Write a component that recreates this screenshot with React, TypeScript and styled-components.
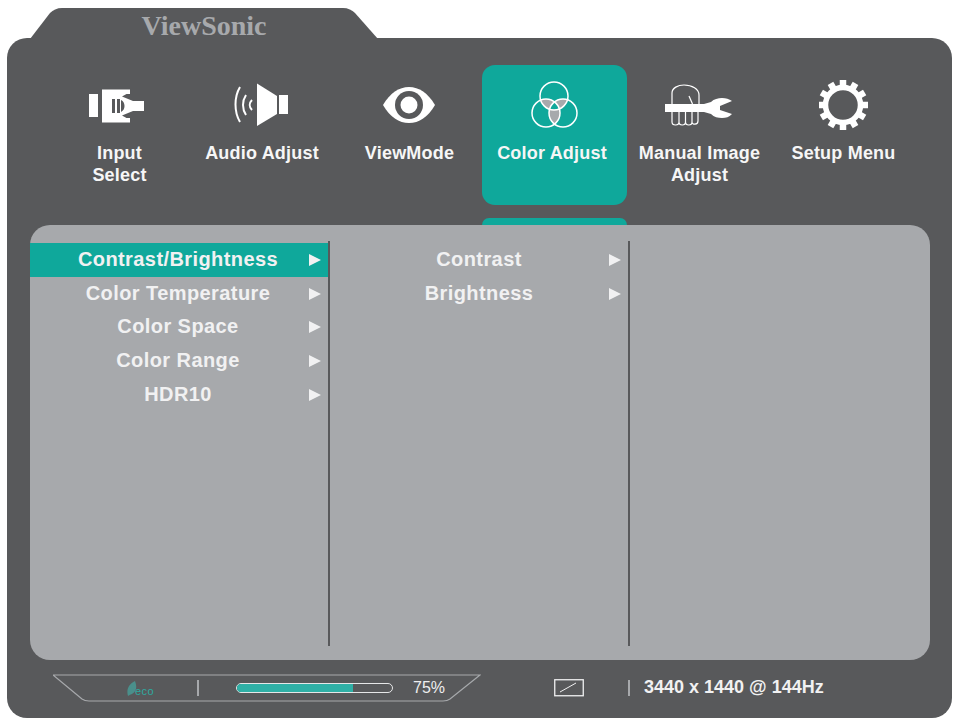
import React from 'react'
import styled, { createGlobalStyle } from 'styled-components'

const teal = '#0fa89b'
const frameGrey = '#58595b'
const panelGrey = '#a7a9ac'

const GlobalStyle = createGlobalStyle`
  html, body {
    margin: 0;
    padding: 0;
    background: #fff;
  }
  body {
    font-family: "Liberation Sans", Arial, sans-serif;
  }
`

const Page = styled.div`
  width: 960px;
  height: 723px;
  padding: 8px 0 0 7px;
  box-sizing: border-box;
  overflow: hidden;
`
const Tab = styled.div`
  position: relative;
  width: 348px;
  height: 30px;
  margin-left: 23px;
  display: flex;
  justify-content: center;
  align-items: flex-start;
`
const TabShape = styled.svg`
  position: absolute;
  left: 0;
  top: 0;
`
const Brand = styled.span`
  position: relative;
  font-family: "Liberation Serif", "Times New Roman", serif;
  font-weight: 700;
  font-size: 28px;
  line-height: 30px;
  color: ${panelGrey};
  margin-top: 3px;
  white-space: nowrap;
`
const Frame = styled.div`
  width: 945px;
  height: 680px;
  box-sizing: border-box;
  background: ${frameGrey};
  border-radius: 20px;
  padding-top: 27px;
  display: flex;
  flex-direction: column;
`
const Nav = styled.nav`
  display: flex;
  padding-left: 40px;
  height: 140px;
`
const Tile = styled.div<{ $active?: boolean }>`
  width: 145px;
  height: 140px;
  border-radius: 13px;
  background: ${p => (p.$active ? teal : 'transparent')};
  display: flex;
  flex-direction: column;
  align-items: center;
`
const IconBox = styled.div`
  height: 77px;
  padding-top: 2px;
  box-sizing: border-box;
  display: flex;
  align-items: center;
  justify-content: center;
`
const TileLabel = styled.div<{ $shift: number }>`
  color: #f6f6f6;
  font-weight: 700;
  font-size: 18px;
  line-height: 22px;
  letter-spacing: 0.2px;
  text-align: center;
  margin-right: ${p => p.$shift * 2}px;
`
const NextTile = styled.div`
  width: 145px;
  height: 7px;
  margin: 13px 0 0 475px;
  background: ${teal};
  border-radius: 7px 7px 0 0;
`
const Panel = styled.section`
  width: 900px;
  height: 435px;
  margin-left: 23px;
  box-sizing: border-box;
  padding-top: 16px;
  background: ${panelGrey};
  border-radius: 20px;
  display: grid;
  grid-template-columns: 300px 300px 1fr;
`
const Column = styled.div`
  height: 405px;
  box-sizing: border-box;
  border-right: 2px solid ${frameGrey};
  padding-top: 2px;
`
const MenuRow = styled.div<{ $selected?: boolean; $inset: number }>`
  height: 33.75px;
  display: flex;
  align-items: center;
  padding: 0 7px 0 ${p => p.$inset}px;
  background: ${p => (p.$selected ? teal : 'transparent')};
  color: #f1f1f2;
  font-weight: 700;
  font-size: 20px;
  letter-spacing: 0.42px;
`
const MenuText = styled.span`
  flex: 1;
  text-align: center;
  white-space: nowrap;
  margin-top: -1px;
`
const Arrow = styled.span`
  width: 0;
  height: 0;
  margin-left: 1px;
  border-left: 12px solid #f1f1f2;
  border-top: 6px solid transparent;
  border-bottom: 6px solid transparent;
`
const Footer = styled.footer`
  display: flex;
  align-items: center;
  height: 55px;
  padding-left: 46px;
`
const Trapezoid = styled.div`
  position: relative;
  width: 428px;
  height: 28px;
  display: flex;
  align-items: center;
`
const TrapezoidLine = styled.svg`
  position: absolute;
  left: 0;
  top: 0;
`
const Eco = styled.div`
  position: relative;
  width: 70px;
  height: 16px;
  margin-left: 74px;
  margin-top: 1px;
  display: flex;
  align-items: flex-end;
`
const EcoText = styled.span`
  position: absolute;
  left: 8px;
  bottom: -1px;
  font-size: 11px;
  line-height: 11px;
  letter-spacing: 0.4px;
  color: #2eaaa0;
`
const Divider = styled.i`
  display: block;
  width: 2px;
  height: 16px;
  background: #a7a9ac;
`
const Progress = styled.div`
  width: 157px;
  height: 10px;
  margin-left: 37px;
  box-sizing: border-box;
  border: 1.5px solid #e6e7e8;
  border-radius: 6px;
  overflow: hidden;
`
const ProgressFill = styled.div`
  height: 100%;
  background: #2fb0a6;
`
const Percent = styled.span`
  position: relative;
  margin-left: 20px;
  font-size: 16px;
  color: #eeeeef;
`
const AspectBox = styled.div`
  margin-left: 73px;
  display: flex;
`
const FooterDivider = styled(Divider)`
  margin-left: 44px;
`
const Resolution = styled.span`
  margin-left: 14px;
  font-weight: 700;
  font-size: 18px;
  color: #f1f1f2;
  white-space: nowrap;
`

const InputIcon = () => (
  <svg width="63" height="36" viewBox="88 89 63 36" fill="#fff">
    <rect x="89" y="96" width="9" height="23" />
    <path d="M102 91.500H130V96H126.500L122 98.500 133 103H144V113H133L122 117.500 126.500 120H130V124.500H102Z" />
    <path d="M112 101h3v14H112ZM117 101h3v14H117ZM121 102c2.500 1 3.500 3.500 3.500 6s-1 4.500-3.500 6Z" fill={frameGrey} />
  </svg>
)

const AudioIcon = () => (
  <svg width="63" height="44" viewBox="233 85 63 44" fill="#fff">
    <path d="M257 85.500 277 98V116L257 128Z" />
    <rect x="279" y="97" width="9" height="19" />
    <path d="M240 89C234 99 234 114 240 124M246 97C242 103 242 111 246 117M252 102C249 105 249 109 252 112" fill="none" stroke="#fff" strokeWidth="2" />
  </svg>
)

const EyeIcon = () => (
  <svg width="55" height="38" viewBox="382 87 55 38">
    <path d="M383 106C390 94 399 88 409 88S428 94 435 106C428 118 419 124 409 124S390 118 383 106Z" fill="#fff" />
    <circle cx="409" cy="106" r="14" fill={frameGrey} />
    <circle cx="409" cy="106" r="8.500" fill="#fff" />
  </svg>
)

const ColorIcon = () => (
  <svg width="49" height="48" viewBox="530 81 49 48">
    <defs>
      <clipPath id="circleTop"><circle cx="554" cy="96" r="14" /></clipPath>
      <clipPath id="circleLeft"><circle cx="546" cy="113" r="14" /></clipPath>
    </defs>
    <circle cx="554" cy="96" r="14" fill={panelGrey} clipPath="url(#circleLeft)" />
    <circle cx="563" cy="113" r="14" fill={panelGrey} clipPath="url(#circleTop)" />
    <circle cx="563" cy="113" r="14" fill={panelGrey} clipPath="url(#circleLeft)" />
    <g clipPath="url(#circleTop)">
      <circle cx="563" cy="113" r="14" fill={teal} clipPath="url(#circleLeft)" />
    </g>
    <g fill="none" stroke="#fff" strokeWidth="1.500">
      <circle cx="554" cy="96" r="14" />
      <circle cx="546" cy="113" r="14" />
      <circle cx="563" cy="113" r="14" />
    </g>
  </svg>
)

const ManualIcon = () => (
  <svg width="71" height="44" viewBox="664 84 71 44">
    <path d="M665 105H704L711 103C714 100 718 99 722 99 726 99 729 100 732 102L720 107V111L732 115C729 118 726 119 722 119 718 119 714 118 711 115L704 113H665Z" fill="#fff" />
    <g fill="none" stroke="#fff" strokeWidth="1.200">
      <path d="M672 105V94C672 89 678 86 684 86 692 86 699 90 699 96V105" />
      <path d="M689 97 692.500 105" />
      <path d="M672 113V123C672 127 679 127 679 123V113M679 123C679 127 685.500 127 685.500 123V113M685.500 123C685.500 127 692 127 692 123V113M692 123C692 126 698 126 698 122V113" />
    </g>
  </svg>
)

const gearTeeth = Array.from({ length: 12 }, (_, i) => i * 30)

const GearIcon = () => (
  <svg width="52" height="52" viewBox="-24 -26 52 52">
    {gearTeeth.map(angle => (
      <rect key={angle} x="-3.250" y="-25" width="6.500" height="8" fill="#fff" transform={`rotate(${angle})`} />
    ))}
    <circle r="17.500" fill="none" stroke="#fff" strokeWidth="5.500" />
  </svg>
)

const tiles = [
  { label: ['Input', 'Select'], icon: <InputIcon />, shift: 0 },
  { label: ['Audio Adjust'], icon: <AudioIcon />, shift: 2.5 },
  { label: ['ViewMode'], icon: <EyeIcon />, shift: 0 },
  { label: ['Color Adjust'], icon: <ColorIcon />, shift: 2.5, active: true },
  { label: ['Manual Image', 'Adjust'], icon: <ManualIcon />, shift: 0 },
  { label: ['Setup Menu'], icon: <GearIcon />, shift: 1 },
]

const mainMenu = ['Contrast/Brightness', 'Color Temperature', 'Color Space', 'Color Range', 'HDR10']
const subMenu = ['Contrast', 'Brightness']

function App() {
  return (
    <Page>
      <GlobalStyle />
      <Tab>
        <TabShape width="348" height="31" viewBox="0 0 348 31">
          <path d="M0 31 L20 5 C23 2 27 0 32 0 H313 C318 0 322 2 325 5 L348 31Z" fill={frameGrey} />
        </TabShape>
        <Brand>ViewSonic</Brand>
      </Tab>
      <Frame>
        <Nav>
          {tiles.map(tile => (
            <Tile key={tile.label[0]} $active={tile.active}>
              <IconBox>{tile.icon}</IconBox>
              <TileLabel $shift={tile.shift}>
                {tile.label.map(line => (
                  <div key={line}>{line}</div>
                ))}
              </TileLabel>
            </Tile>
          ))}
        </Nav>
        <NextTile />
        <Panel>
          <Column>
            {mainMenu.map((item, i) => (
              <MenuRow key={item} $selected={i === 0} $inset={18}>
                <MenuText>{item}</MenuText>
                <Arrow />
              </MenuRow>
            ))}
          </Column>
          <Column>
            {subMenu.map(item => (
              <MenuRow key={item} $inset={20}>
                <MenuText>{item}</MenuText>
                <Arrow />
              </MenuRow>
            ))}
          </Column>
        </Panel>
        <Footer>
          <Trapezoid>
            <TrapezoidLine width="428" height="28" viewBox="0 0 428 28" fill="none" stroke="#a7a9ac" strokeWidth="1.200">
              <path d="M0 1H427L397 25C395 26.500 393 27 390 27H36C33 27 31 26.500 29 25Z" />
            </TrapezoidLine>
            <Eco>
              <svg width="10" height="15" viewBox="0 0 10 15">
                <path d="M1 15C-1 8 2 3 8 0 10 5 10 10 5 13 3 14 2 14 1 15Z" fill="#4a8f8b" />
              </svg>
              <EcoText>eco</EcoText>
            </Eco>
            <Divider />
            <Progress>
              <ProgressFill style={{ width: '75%' }} />
            </Progress>
            <Percent>75%</Percent>
          </Trapezoid>
          <AspectBox>
            <svg width="30" height="18" viewBox="0 0 30 18" fill="none" stroke="#f1f1f2">
              <rect x="0.750" y="0.750" width="28.500" height="16" strokeWidth="1.300" />
              <path d="M6 13 22 4" strokeWidth="1" />
            </svg>
          </AspectBox>
          <FooterDivider />
          <Resolution>3440 x 1440 @ 144Hz</Resolution>
        </Footer>
      </Frame>
    </Page>
  )
}

export default App
